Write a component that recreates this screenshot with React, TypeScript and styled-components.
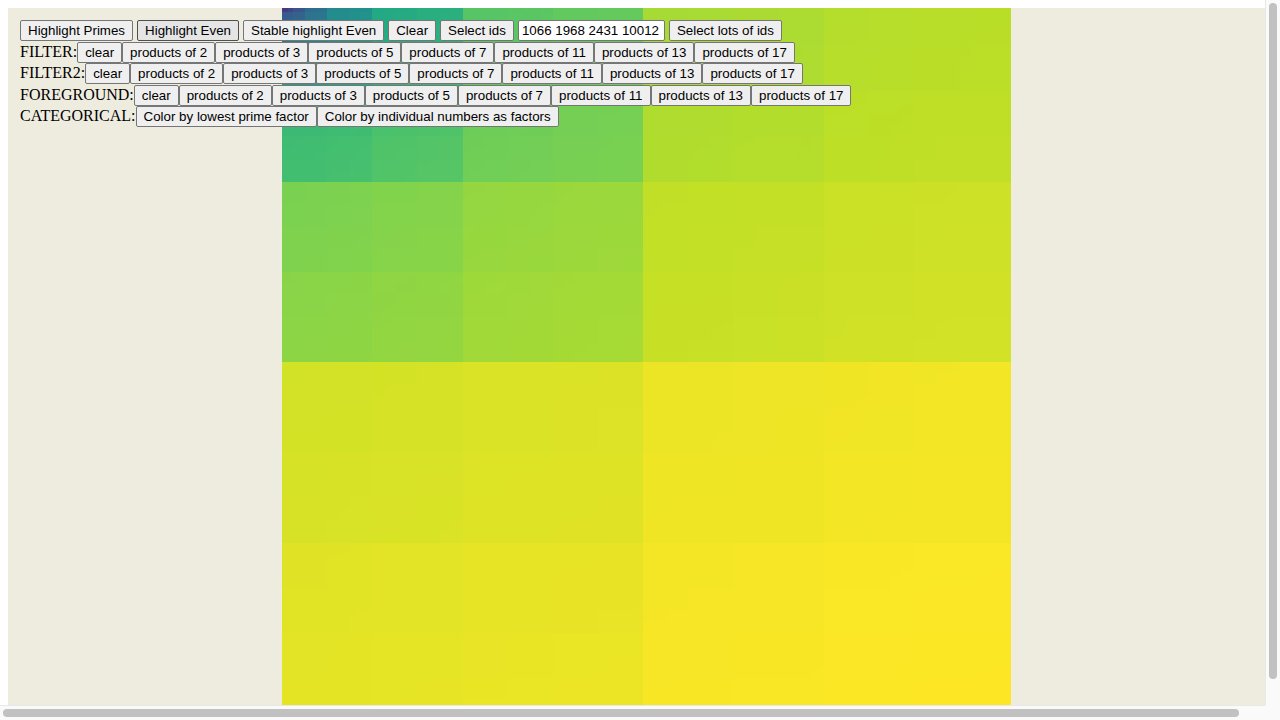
import React, { useMemo } from "react";
import styled, { createGlobalStyle } from "styled-components";

const GlobalStyle = createGlobalStyle`
  html {
    margin: 0;
    padding: 0;
    overflow: hidden;
  }
  body {
    margin: 8px;
    overflow: hidden;
    background: #ffffff;
    font-family: "Liberation Serif", "Times New Roman", serif;
    font-size: 16px;
    color: #000;
  }
`;

const Stage = styled.div`
  position: relative;
  width: 1277px;
  height: 718px;
  background: #eeecdf;
  display: flex;
  justify-content: center;
`;

const Heatmap = styled.svg`
  display: block;
  flex-shrink: 0;
  width: 729px;
  height: 718px;
`;

const Controls = styled.div`
  position: absolute;
  top: 12px;
  left: 12px;
  display: flex;
  flex-direction: column;
`;

const Row = styled.div<{ $gap?: number }>`
  display: flex;
  align-items: baseline;
  height: 21.5px;
  gap: ${(p) => p.$gap ?? 0}px;
`;

const Label = styled.span`
  font-family: "Liberation Serif", "Times New Roman", serif;
  font-size: 16px;
  line-height: normal;
  color: #000;
  white-space: nowrap;
`;

const Button = styled.button<{ $hover?: boolean }>`
  font-family: "Liberation Sans", Arial, sans-serif;
  font-size: 13.333px;
  line-height: normal;
  margin: 0;
  padding: 2px 7px;
  border: 1px solid ${(p) => (p.$hover ? "#4f4f4f" : "#767676")};
  border-radius: 2px;
  background: ${(p) => (p.$hover ? "#e5e5e5" : "#efefef")};
  color: #000;
  white-space: nowrap;
  cursor: default;
`;

const IdsInput = styled.input`
  box-sizing: border-box;
  width: 147px;
  font-family: "Liberation Sans", Arial, sans-serif;
  font-size: 13.333px;
  line-height: normal;
  margin: 0;
  padding: 2px 3px;
  border: 1px solid #767676;
  border-radius: 2px;
  background: #ffffff;
  color: #000;
  outline: none;
`;

/* Window scrollbars, drawn over the page edge */
const VTrack = styled.div`
  position: fixed;
  top: 0;
  right: 0;
  bottom: 15px;
  width: 14px;
  border-left: 1px solid #e8e8e8;
  background: #fafafa;
`;

const VThumb = styled.div`
  position: absolute;
  top: 3px;
  left: 3px;
  width: 8px;
  height: 676px;
  border-radius: 4px;
  background: #c1c1c1;
`;

const HTrack = styled.div`
  position: fixed;
  left: 0;
  right: 15px;
  bottom: 0;
  height: 14px;
  border-top: 1px solid #e8e8e8;
  background: #fafafa;
`;

const HThumb = styled.div`
  position: absolute;
  top: 3px;
  left: 3px;
  height: 8px;
  width: 1236px;
  border-radius: 4px;
  background: #c1c1c1;
`;

const Corner = styled.div`
  position: fixed;
  right: 0;
  bottom: 0;
  width: 15px;
  height: 15px;
  background: #fafafa;
`;

const STOPS: number[][] = [
  [68, 1, 84],
  [72, 36, 117],
  [65, 68, 135],
  [53, 95, 141],
  [42, 120, 142],
  [33, 145, 140],
  [34, 168, 132],
  [68, 191, 112],
  [122, 209, 81],
  [189, 223, 38],
  [253, 231, 37],
];

function viridis(t: number): string {
  const c = Math.max(0, Math.min(1, t));
  const s = c * 10;
  const i = Math.min(9, Math.floor(s));
  const f = s - i;
  const a = STOPS[i];
  const b = STOPS[i + 1];
  const r = Math.round(a[0] + (b[0] - a[0]) * f);
  const g = Math.round(a[1] + (b[1] - a[1]) * f);
  const bl = Math.round(a[2] + (b[2] - a[2]) * f);
  return `rgb(${r},${g},${bl})`;
}

const G = 128;
const N = 32768;
const SIZE = 722;
const W = 729;
const H = 718;
const Y_OFFSET = -7;

function morton(i: number, j: number): number {
  let m = 0;
  for (let b = 0; b < 8; b++) {
    m |= ((i >> b) & 1) << (2 * b);
    m |= ((j >> b) & 1) << (2 * b + 1);
  }
  return m;
}

type Cell = { x: number; y: number; w: number; h: number; fill: string; key: string };

function buildCells(): Cell[] {
  const cs = SIZE / G;
  const per = N / (G * G);
  const logN = Math.log(N + 1);
  const cells: Cell[] = [];
  for (let j = 0; j < G; j++) {
    const y0 = Math.round(j * cs) + Y_OFFSET;
    const y1 = j === G - 1 ? H : Math.round((j + 1) * cs) + Y_OFFSET;
    for (let i = 0; i < G; i++) {
      const x0 = Math.round(i * cs);
      const x1 = i === G - 1 ? W : Math.round((i + 1) * cs);
      const m = morton(i, j);
      const v = Math.log(1 + (m + 0.5) * per) / logN;
      cells.push({ x: x0, y: y0, w: x1 - x0, h: y1 - y0, fill: viridis(v), key: `${i}-${j}` });
    }
  }
  return cells;
}

const PRODUCTS = [2, 3, 5, 7, 11, 13, 17];

function FilterRow({ label }: { label: string }) {
  return (
    <Row>
      <Label>{label}</Label>
      <Button>clear</Button>
      {PRODUCTS.map((p) => (
        <Button key={p}>products of {p}</Button>
      ))}
    </Row>
  );
}

export default function App() {
  const cells = useMemo(buildCells, []);
  return (
    <>
      <GlobalStyle />
      <Stage>
        <Heatmap viewBox={`0 0 ${W} ${H}`} shapeRendering="crispEdges">
          {cells.map((c) => (
            <rect key={c.key} x={c.x} y={c.y} width={c.w} height={c.h} fill={c.fill} />
          ))}
        </Heatmap>
        <Controls>
          <Row $gap={4}>
            <Button>Highlight Primes</Button>
            <Button $hover>Highlight Even</Button>
            <Button>Stable highlight Even</Button>
            <Button>Clear</Button>
            <Button>Select ids</Button>
            <IdsInput readOnly value="1066 1968 2431 10012" />
            <Button>Select lots of ids</Button>
          </Row>
          <FilterRow label="FILTER:" />
          <FilterRow label="FILTER2:" />
          <FilterRow label="FOREGROUND:" />
          <Row>
            <Label>CATEGORICAL:</Label>
            <Button>Color by lowest prime factor</Button>
            <Button>Color by individual numbers as factors</Button>
          </Row>
        </Controls>
      </Stage>
      <VTrack>
        <VThumb />
      </VTrack>
      <HTrack>
        <HThumb />
      </HTrack>
      <Corner />
    </>
  );
}
